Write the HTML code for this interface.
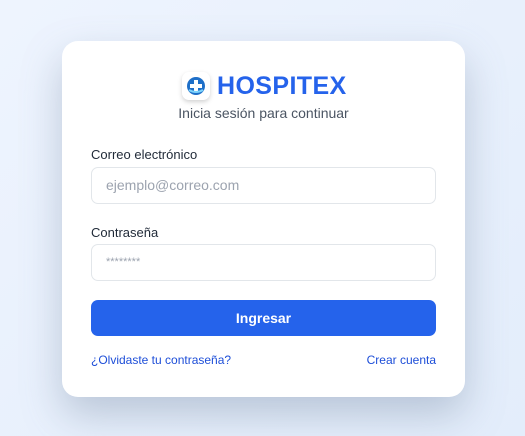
<!DOCTYPE html>
<html><head><meta charset="utf-8"><style>
*{box-sizing:border-box;margin:0;padding:0}
html,body{width:525px;height:436px;overflow:hidden}
body{background:linear-gradient(135deg,#eef4fe,#e3edfb);font-family:"Liberation Sans",sans-serif;position:relative}
.card{position:absolute;left:62px;top:41px;width:403px;height:356px;background:#fff;border-radius:16px;box-shadow:0 18px 40px rgba(100,120,150,.35)}
.logo{position:absolute;left:120px;top:31px;width:28px;height:28px;border-radius:7px;background:#fff;box-shadow:0 2px 5px rgba(0,0,0,.18)}
.title{position:absolute;left:155px;top:31px;font-size:25px;font-weight:bold;color:#2563eb;letter-spacing:.4px}
.sub{position:absolute;left:0;width:403px;text-align:center;top:64px;font-size:14px;color:#4b5563}
.lbl{position:absolute;left:29px;font-size:13px;color:#1f2937}
.inp{position:absolute;left:29px;width:345px;height:37px;border:1px solid #e2e6ea;border-radius:7px;padding-left:14px;line-height:35px;font-size:14px;color:#9ca3af}
.btn{position:absolute;left:29px;top:259px;width:345px;height:36px;border-radius:7px;background:#2563eb;color:#fff;font-weight:bold;font-size:14px;text-align:center;line-height:36px}
.lnk{position:absolute;top:312px;font-size:12px;color:#1d4ed8}
</style></head><body>
<div class="card">
 <div class="logo"><svg width="28" height="28" viewBox="0 0 28 28"><circle cx="14" cy="14" r="9" fill="#1e6fc8"/><rect x="12" y="8" width="4" height="12" fill="#fff"/><rect x="8" y="12" width="12" height="4" fill="#fff"/><path d="M7 18 q7 4 14 0" stroke="#7dd3fc" stroke-width="2" fill="none"/></svg></div>
 <div class="title">HOSPITEX</div>
 <div class="sub">Inicia sesión para continuar</div>
 <div class="lbl" style="top:106px">Correo electrónico</div>
 <div class="inp" style="top:126px">ejemplo@correo.com</div>
 <div class="lbl" style="top:184px">Contraseña</div>
 <div class="inp" style="top:203px;font-size:11px">********</div>
 <div class="btn">Ingresar</div>
 <div class="lnk" style="left:29px">¿Olvidaste tu contraseña?</div>
 <div class="lnk" style="right:29px">Crear cuenta</div>
</div>
</body></html>
